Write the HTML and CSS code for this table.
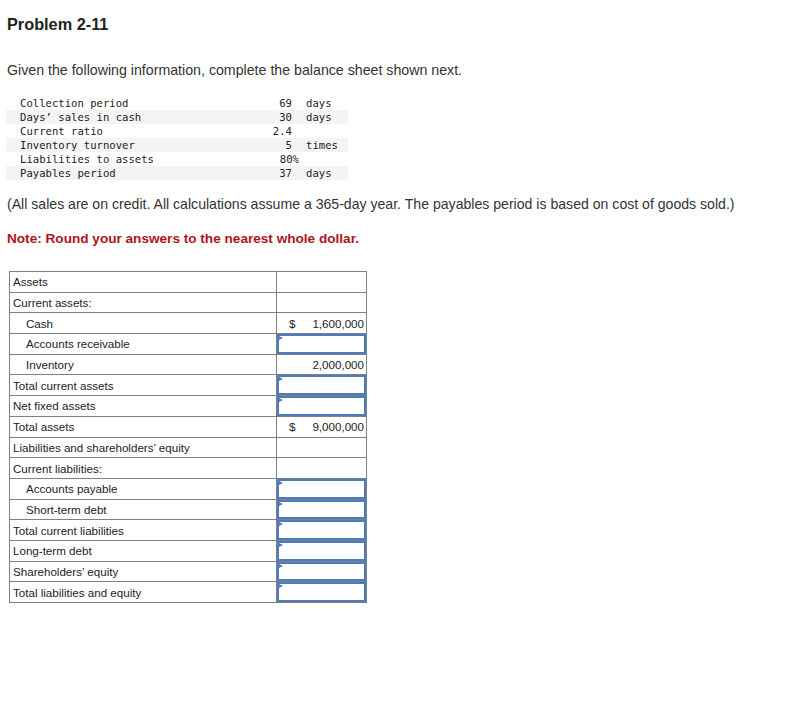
FILE: index.html
```html
<!DOCTYPE html>
<html>
<head>
<meta charset="utf-8">
<link rel="stylesheet" href="styles.css">
</head>
<body>
<h1 class="title">Problem 2-11</h1>
<p class="intro">Given the following information, complete the balance sheet shown next.</p>
<table class="facts">
  <tr><td class="f-label">Collection period</td><td class="f-val">69</td><td class="f-unit">days</td></tr>
  <tr class="shade"><td class="f-label">Days’ sales in cash</td><td class="f-val">30</td><td class="f-unit">days</td></tr>
  <tr><td class="f-label">Current ratio</td><td class="f-val">2.4</td><td class="f-unit"></td></tr>
  <tr class="shade"><td class="f-label">Inventory turnover</td><td class="f-val">5</td><td class="f-unit">times</td></tr>
  <tr><td class="f-label">Liabilities to assets</td><td class="f-val">80<span class="pct">%</span></td><td class="f-unit"></td></tr>
  <tr class="shade"><td class="f-label">Payables period</td><td class="f-val">37</td><td class="f-unit">days</td></tr>
</table>
<p class="assume">(All sales are on credit. All calculations assume a 365-day year. The payables period is based on cost of goods sold.)</p>
<p class="note">Note: Round your answers to the nearest whole dollar.</p>
<table class="sheet">
  <colgroup><col class="c-lbl"><col class="c-val"></colgroup>
  <tr><td class="lbl">Assets</td><td class="val"></td></tr>
  <tr><td class="lbl">Current assets:</td><td class="val"></td></tr>
  <tr><td class="lbl ind">Cash</td><td class="val"><div class="amt"><span>$</span><span>1,600,000</span></div></td></tr>
  <tr><td class="lbl ind">Accounts receivable</td><td class="val inp"><div class="answer"><input type="text"></div></td></tr>
  <tr><td class="lbl ind">Inventory</td><td class="val"><div class="amt"><span></span><span>2,000,000</span></div></td></tr>
  <tr><td class="lbl">Total current assets</td><td class="val inp"><div class="answer"><input type="text"></div></td></tr>
  <tr><td class="lbl">Net fixed assets</td><td class="val inp"><div class="answer"><input type="text"></div></td></tr>
  <tr><td class="lbl">Total assets</td><td class="val"><div class="amt"><span>$</span><span>9,000,000</span></div></td></tr>
  <tr><td class="lbl">Liabilities and shareholders’ equity</td><td class="val"></td></tr>
  <tr><td class="lbl">Current liabilities:</td><td class="val"></td></tr>
  <tr><td class="lbl ind">Accounts payable</td><td class="val inp"><div class="answer"><input type="text"></div></td></tr>
  <tr><td class="lbl ind">Short-term debt</td><td class="val inp"><div class="answer"><input type="text"></div></td></tr>
  <tr><td class="lbl">Total current liabilities</td><td class="val inp"><div class="answer"><input type="text"></div></td></tr>
  <tr><td class="lbl">Long-term debt</td><td class="val inp"><div class="answer"><input type="text"></div></td></tr>
  <tr><td class="lbl">Shareholders’ equity</td><td class="val inp"><div class="answer"><input type="text"></div></td></tr>
  <tr><td class="lbl">Total liabilities and equity</td><td class="val inp"><div class="answer"><input type="text"></div></td></tr>
</table>
</body>
</html>
```

FILE: styles.css
```css
html, body {
  margin: 0;
  padding: 0;
  background: #fff;
}
body {
  padding: 0 7px;
  font-family: "Liberation Sans", Arial, sans-serif;
  color: #222;
}
.title {
  margin: 0;
  padding-top: 14px;
  font-size: 16.3px;
  line-height: 20px;
  font-weight: bold;
  color: #222;
}
.intro {
  margin: 26px 0 0;
  font-size: 14.2px;
  line-height: 20px;
  color: #333;
}
.facts {
  margin: 16px 0 0 -1px;
  border-collapse: collapse;
  font-family: "DejaVu Sans Mono", monospace;
  font-size: 10.6px;
  color: #222;
  width: 342px;
}
.facts td {
  height: 14px;
  padding: 0;
  line-height: 14px;
  white-space: pre;
}
.facts .shade td {
  background: #f4f4f4;
}
.f-label {
  padding-left: 14px !important;
  width: 242px;
}
.f-val {
  width: 30px;
  text-align: right;
}
.pct {
  margin-right: -7px;
}
.f-unit {
  padding-left: 14px !important;
}
.assume {
  margin: 14px 0 0;
  font-size: 14.1px;
  line-height: 20px;
  color: #333;
}
.note {
  margin: 15px 0 0;
  font-size: 13.6px;
  line-height: 20px;
  font-weight: bold;
  color: #b0141b;
}
.sheet {
  margin: 22px 0 0 2px;
  border-collapse: collapse;
  table-layout: fixed;
  width: 357px;
  font-size: 11.6px;
  color: #222;
}
.c-lbl {
  width: 267px;
}
.c-val {
  width: 90px;
}
.sheet td {
  border: 1px solid #808080;
  height: 19.7px;
  padding: 0;
  white-space: nowrap;
}
.lbl {
  padding-left: 3px !important;
}
.lbl.ind {
  padding-left: 16px !important;
}
.amt {
  display: flex;
  justify-content: space-between;
  padding: 0 2px 0 12px;
}
.answer {
  position: relative;
  height: 19.7px;
}
.answer::before {
  content: "";
  position: absolute;
  left: 2px;
  top: 2px;
  border-left: 4px solid #4a7cbf;
  border-top: 2px solid transparent;
  border-bottom: 2px solid transparent;
}
.answer input {
  display: block;
  box-sizing: border-box;
  width: 100%;
  height: 100%;
  margin: 0;
  border: 2px solid #4a7cbf;
  padding: 0 2px;
  font: inherit;
  background: transparent;
  outline: none;
}
```
